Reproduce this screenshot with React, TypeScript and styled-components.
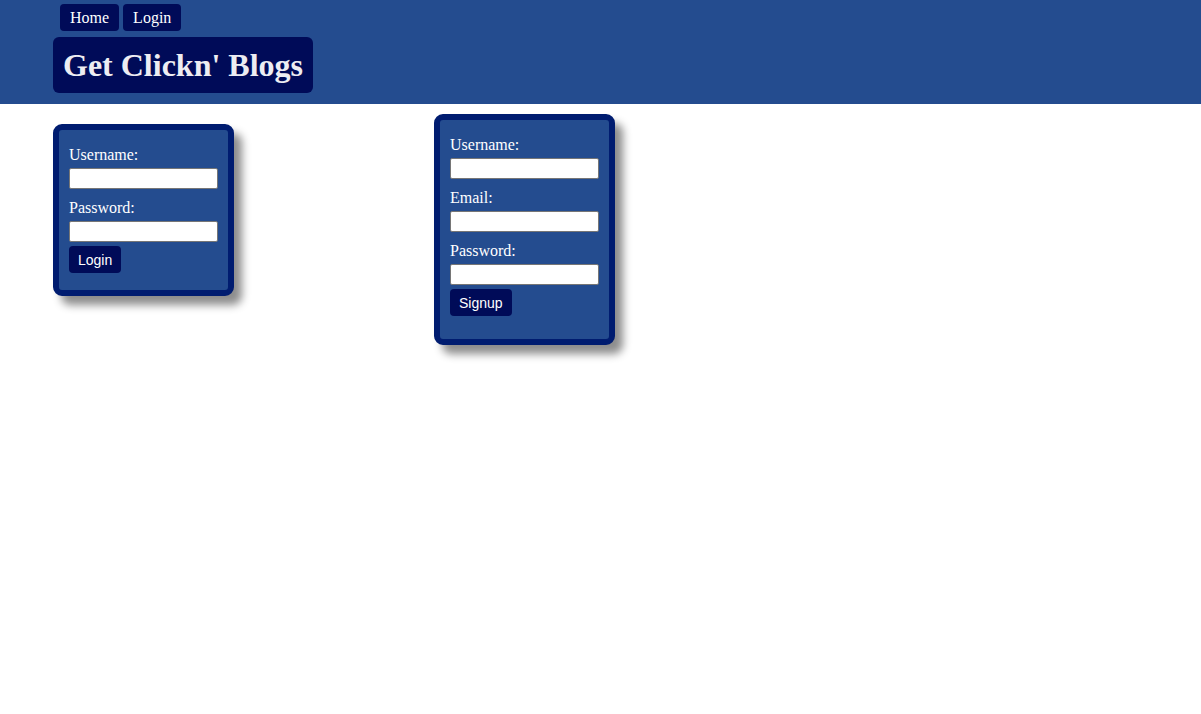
import React from 'react';
import styled, { createGlobalStyle } from 'styled-components';

const GlobalStyle = createGlobalStyle`
  body {
    margin: 0;
    background: #fff;
    font-family: 'Liberation Serif', 'Times New Roman', serif;
  }
`;

const Header = styled.header`
  background-color: #244c8f;
  height: 104px;
  box-sizing: border-box;
  padding-top: 4px;
`;

const Nav = styled.nav`
  display: flex;
  gap: 4px;
  padding-left: 60px;
`;

const NavButton = styled.a`
  display: flex;
  align-items: center;
  height: 27px;
  padding: 0 10px;
  background-color: #000b58;
  color: #fff;
  font-size: 16px;
  border-radius: 4px;
  text-decoration: none;
  cursor: pointer;
`;

const Title = styled.h1`
  display: inline-flex;
  align-items: center;
  height: 56px;
  margin: 6px 0 0 53px;
  padding: 0 10px;
  box-sizing: border-box;
  background-color: #000b58;
  color: #ededf2;
  font-size: 32px;
  font-weight: bold;
  border-radius: 6px;
`;

const Main = styled.main`
  display: flex;
  align-items: flex-start;
  gap: 200px;
  padding: 10px 0 40px 53px;
`;

const Card = styled.form<{ top: number; bottom: number }>`
  width: 181px;
  box-sizing: border-box;
  margin-top: ${(p) => p.top}px;
  padding: 16px 10px ${(p) => p.bottom}px;
  background-color: #244c8f;
  border: 6px solid #001c70;
  border-radius: 9px;
  box-shadow: 8px 9px 9px rgba(0, 0, 0, 0.45);
`;

const Label = styled.label`
  display: block;
  color: #fff;
  font-size: 16px;
  line-height: 18px;
  margin-bottom: 4px;
`;

const Input = styled.input`
  display: block;
  width: 149px;
  height: 21px;
  box-sizing: border-box;
  margin: 0 0 10px;
  border: 1px solid #767676;
  border-radius: 2px;
  background: #fff;
  &:last-of-type {
    margin-bottom: 4px;
  }
`;

const Button = styled.button`
  height: 27px;
  padding: 0 9px;
  border: none;
  border-radius: 4px;
  background-color: #000b58;
  color: #fff;
  font-family: 'Liberation Sans', Arial, sans-serif;
  font-size: 14px;
  cursor: pointer;
`;

const App = () => {
  return (
    <>
      <GlobalStyle />
      <Header>
        <Nav>
          <NavButton>Home</NavButton>
          <NavButton>Login</NavButton>
        </Nav>
        <Title>Get Clickn' Blogs</Title>
      </Header>
      <Main>
        <Card top={10} bottom={17} onSubmit={(e) => e.preventDefault()}>
          <Label>Username:</Label>
          <Input type="text" />
          <Label>Password:</Label>
          <Input type="password" />
          <Button type="submit">Login</Button>
        </Card>
        <Card top={0} bottom={23} onSubmit={(e) => e.preventDefault()}>
          <Label>Username:</Label>
          <Input type="text" />
          <Label>Email:</Label>
          <Input type="email" />
          <Label>Password:</Label>
          <Input type="password" />
          <Button type="submit">Signup</Button>
        </Card>
      </Main>
    </>
  );
};

export default App;
